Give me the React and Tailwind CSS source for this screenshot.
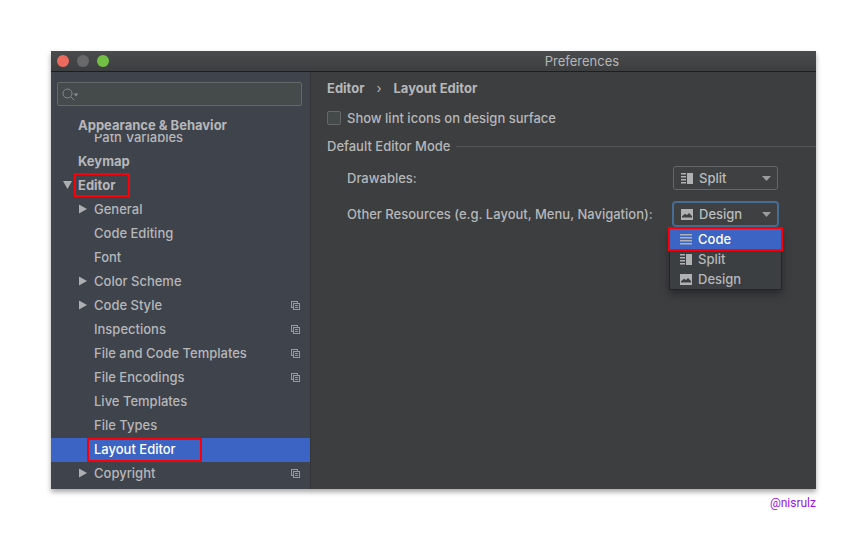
import React from "react";

const settings = [
  { label: "General", arrow: true },
  { label: "Code Editing" },
  { label: "Font" },
  { label: "Color Scheme", arrow: true },
  { label: "Code Style", arrow: true, project: true },
  { label: "Inspections", project: true },
  { label: "File and Code Templates", project: true },
  { label: "File Encodings", project: true },
  { label: "Live Templates" },
  { label: "File Types" },
  { label: "Layout Editor", selected: true },
  { label: "Copyright", arrow: true, project: true },
];

function RightArrow() {
  return (
    <svg width="8" height="10" viewBox="0 0 8 10" fill="#adafb1">
      <path d="M0 .5 8 5 0 9.5z" />
    </svg>
  );
}

function ProjectIcon() {
  return (
    <svg width="9" height="9" viewBox="0 0 9 9" fill="none" stroke="#969aa3" shapeRendering="crispEdges">
      <path d="M2 6.5H.5V.5h6V2" />
      <path d="M2.5 2.5h6v6h-6zM4 4.5h3M4 6.5h3" />
    </svg>
  );
}

function ModeIcon({ mode, className = "" }) {
  return (
    <svg className={className} width="12" height="11" viewBox="0 0 12 11" fill="#afb1b3">
      {mode === "Code" && <path d="M0 0h12v1.6H0zM0 3h12v1.6H0zM0 6h12v1.6H0zM0 9h12v1.6H0z" />}
      {mode === "Split" && <path d="M0 0h5v1.6H0zM0 3h5v1.6H0zM0 6h5v1.6H0zM0 9h5v1.6H0zM6 0h6v11H6z" />}
      {mode === "Design" && (
        <path fillRule="evenodd" d="M0 0h12v11H0zM1 8.5h10V7L8 4 6 6 4 4.800 1 7.200z" />
      )}
    </svg>
  );
}

function ModeSelect({ id, value, focused }) {
  return (
    <div className="relative h-6 w-[105px]">
      <select
        id={id}
        defaultValue={value}
        className={
          "h-6 w-full appearance-none rounded-[3px] border bg-[#3e4042] pl-[25px] text-[#bbbcbd] outline-none " +
          (focused ? "border-[#466d94] ring-1 ring-[#466d94]" : "border-[#646668]")
        }
      >
        <option>Code</option>
        <option>Split</option>
        <option>Design</option>
      </select>
      <ModeIcon mode={value} className="pointer-events-none absolute top-[7px] left-2" />
      <svg className="pointer-events-none absolute top-[10px] right-[7px]" width="9" height="5" viewBox="0 0 9 5" fill="#9a9c9e">
        <path d="M0 0h9L4.500 5z" />
      </svg>
    </div>
  );
}

function Highlight({ className }) {
  return <span className={"pointer-events-none absolute border-2 border-[#fb0007] " + className} />;
}

function Sidebar() {
  return (
    <aside className="w-[260px] shrink-0 border-r border-[#343537] bg-[#3f434c]">
      <div className="relative mt-[10px] mr-2 ml-[6px]">
        <input
          type="search"
          aria-label="Search settings"
          className="block h-6 w-full rounded-[2px] border border-[#646868] bg-[#454a4a] pl-6 outline-none"
        />
        <svg className="pointer-events-none absolute top-[6px] left-[5px]" width="17" height="12" viewBox="0 0 17 12" fill="none" stroke="#858b8f">
          <circle cx="5.500" cy="5.500" r="4.500" />
          <path d="m9 9 3 3" />
          <path d="M11.500 5.500h5L14 8.500z" fill="#858b8f" stroke="none" />
        </svg>
      </div>
      <nav className="flex flex-col">
        <a href="#appearance" className="flex h-7 items-center pt-3 pb-[2px] pl-[27px] font-bold">Appearance &amp; Behavior</a>
        <div className="flex h-4 items-end overflow-hidden">
          <a href="#path-variables" className="flex h-6 items-center pb-[2px] pl-[43px]">Path Variables</a>
        </div>
        <a href="#keymap" className="flex h-6 items-center pb-[2px] pl-[27px] font-bold">Keymap</a>
        <a href="#editor" className="relative flex h-6 items-center pb-[2px] pl-3 font-bold">
          <svg className="mr-[6px]" width="9" height="8" viewBox="0 0 9 8" fill="#adafb1">
            <path d="M0 0h9L4.500 8z" />
          </svg>
          Editor
          <Highlight className="-top-px left-[23px] h-6 w-14" />
        </a>
        {settings.map((item) => (
          <a
            key={item.label}
            href={"#" + item.label.toLowerCase().replaceAll(" ", "-")}
            className={"relative flex h-6 items-center pr-[10px] pb-[2px] pl-7 " + (item.selected ? "bg-[#3b64c4] text-white" : "")}
          >
            <span className="w-[15px] shrink-0">{item.arrow && <RightArrow />}</span>
            <span className="grow">{item.label}</span>
            {item.project && <ProjectIcon />}
            {item.selected && <Highlight className="top-0 left-9 h-6 w-[115px]" />}
          </a>
        ))}
      </nav>
    </aside>
  );
}

function ModeMenu() {
  return (
    <div role="listbox" aria-label="Editor mode" className="absolute top-[27px] -left-1 w-[113px] border border-t-0 border-[#232425] bg-[#3c3f41] shadow-[0_4px_8px_rgba(0,0,0,0.35)]">
      {["Code", "Split", "Design"].map((mode) => (
        <button
          key={mode}
          type="button"
          role="option"
          aria-selected={mode === "Code"}
          className={"flex h-5 w-full items-center gap-[6px] pl-[10px] " + (mode === "Code" ? "bg-[#3b64c4] text-white" : "")}
        >
          <ModeIcon mode={mode} />
          {mode}
        </button>
      ))}
      <Highlight className="-top-[2px] -left-[2px] h-6 w-[115px]" />
    </div>
  );
}

export default function App() {
  return (
    <div className="bg-white py-[51px] pr-[52px] pl-[51px] font-['Inter','Liberation_Sans',sans-serif] text-[13px] leading-4 font-medium text-[#b6b7b9]">
      <main className="bg-[#3d3e40] shadow-[0_3px_5px_rgba(0,0,0,0.35)]">
        <header className="flex h-[21px] items-center border-b border-[#1d1e1f] bg-linear-to-b from-[#494b4c] to-[#3d3e3f] pl-[6px]">
          <div className="flex gap-2">
            <button type="button" aria-label="Close" className="size-3 rounded-full bg-[#ed6a5e]" />
            <button type="button" aria-label="Minimize" className="size-3 rounded-full bg-[#69696b]" />
            <button type="button" aria-label="Zoom" className="size-3 rounded-full bg-[#71c045]" />
          </div>
          <h1 className="grow pl-[239px] text-center font-normal">Preferences</h1>
        </header>
        <div className="flex">
          <Sidebar />
          <section className="min-w-0 grow pt-2 pl-4">
            <h2 className="flex gap-3 font-bold">
              <span>Editor</span>
              <span className="font-normal">›</span>
              <span>Layout Editor</span>
            </h2>
            <label className="mt-[14px] flex items-center gap-[6px]">
              <input type="checkbox" className="size-[14px] appearance-none rounded-[2px] border border-[#65696a] bg-[#444a4a]" />
              Show lint icons on design surface
            </label>
            <div className="mt-3 flex items-center gap-[6px]">
              <h3 className="font-medium">Default Editor Mode</h3>
              <hr className="grow border-[#545557]" />
            </div>
            <div className="mt-3 grid grid-cols-[326px_auto] items-center gap-y-3 pl-5">
              <label htmlFor="drawables">Drawables:</label>
              <ModeSelect id="drawables" value="Split" />
              <label htmlFor="resources">Other Resources (e.g. Layout, Menu, Navigation):</label>
              <div className="relative">
                <ModeSelect id="resources" value="Design" focused />
                <ModeMenu />
              </div>
            </div>
          </section>
        </div>
        <div className="flex h-[3px]">
          <div className="w-[260px] border-r border-[#343537] bg-[#3f434c]" />
        </div>
      </main>
      <p className="mt-[6px] text-right font-['Roboto',sans-serif] text-[12px] font-normal text-[#9a10e0]">@nisrulz</p>
    </div>
  );
}
